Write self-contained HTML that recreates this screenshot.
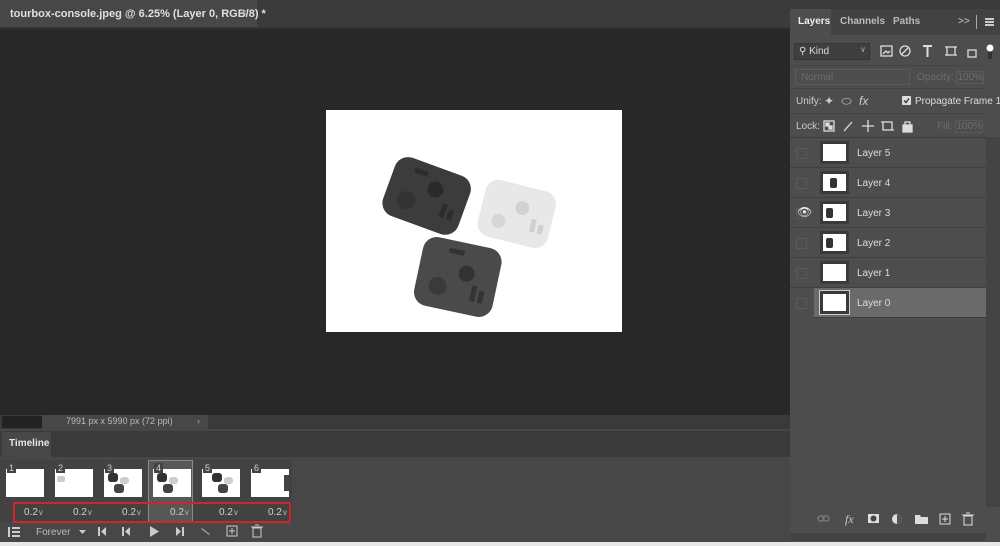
<!DOCTYPE html>
<html><head><meta charset="utf-8"><style>
*{margin:0;padding:0;box-sizing:border-box}
body{width:1000px;height:546px;background:#282828;font-family:"Liberation Sans",sans-serif;position:relative;overflow:hidden;color:#ddd}
.abs{position:absolute}
.t{font-size:10px;color:#d0d0d0;white-space:nowrap}
</style></head><body>
<div class="abs" style="left:0;top:0;width:790px;height:27px;background:#3b3b3b"></div>
<div class="abs" style="left:0;top:0;width:257px;height:27px;background:#474747"></div>
<div class="abs t" style="left:10px;top:8px;font-size:11px;font-weight:bold;color:#e0e0e0">tourbox-console.jpeg @ 6.25% (Layer 0, RGB/8) *</div>
<div class="abs t" style="left:241px;top:7px;font-size:11px;color:#999">×</div>
<div class="abs" style="left:0;top:27px;width:790px;height:2px;background:#323232"></div>
<div class="abs" style="left:326px;top:110px;width:296px;height:222px;background:#fff"></div>
<svg class="abs" style="left:326px;top:110px" width="296" height="222" viewBox="0 0 296 222">
 <g transform="translate(101,85) rotate(20)">
  <rect x="-40" y="-30" width="80" height="62" rx="14" fill="#3c3c3c"/>
  <circle cx="6" cy="-8" r="8" fill="#2a2a2a"/><circle cx="-18" cy="12" r="9" fill="#333"/>
  <rect x="18" y="2" width="5" height="14" fill="#2c2c2c"/><rect x="26" y="6" width="5" height="10" fill="#2c2c2c"/>
  <rect x="-20" y="-22" width="14" height="5" rx="2" fill="#2c2c2c"/>
 </g>
 <g transform="translate(191,103) rotate(14)">
  <rect x="-36" y="-28" width="72" height="58" rx="13" fill="#e8e8e8"/>
  <circle cx="4" cy="-6" r="7" fill="#d2d2d2"/><circle cx="-16" cy="12" r="7" fill="#d6d6d6"/>
  <rect x="16" y="2" width="5" height="13" fill="#d0d0d0"/><rect x="24" y="6" width="5" height="9" fill="#d0d0d0"/>
 </g>
 <g transform="translate(132,166) rotate(12)">
  <rect x="-40" y="-34" width="80" height="70" rx="14" fill="#4a4a4a"/>
  <circle cx="8" cy="-4" r="8" fill="#333"/><circle cx="-18" cy="14" r="9" fill="#3a3a3a"/>
  <rect x="16" y="6" width="5" height="16" fill="#333"/><rect x="24" y="10" width="5" height="12" fill="#333"/>
  <rect x="-14" y="-26" width="16" height="5" rx="2" fill="#333"/>
 </g>
</svg>
<div class="abs" style="left:0;top:415px;width:790px;height:14px;background:#3a3a3a"></div>
<div class="abs" style="left:42px;top:415px;width:166px;height:14px;background:#474747"></div>
<div class="abs" style="left:2px;top:416px;width:40px;height:12px;background:#222"></div>
<div class="abs t" style="left:66px;top:416px;font-size:9px;color:#bbb">7991 px x 5990 px (72 ppi)</div>
<div class="abs t" style="left:197px;top:416px;font-size:9px;color:#aaa">›</div>
<div class="abs" style="left:0;top:429px;width:790px;height:113px;background:#474747"></div>
<div class="abs" style="left:0;top:431px;width:790px;height:26px;background:#3a3a3a"></div>
<div class="abs" style="left:2px;top:432px;width:49px;height:25px;background:#474747"></div>
<div class="abs t" style="left:9px;top:438px;font-size:10px;font-weight:bold;color:#e6e6e6">Timeline</div>
<div class="abs" style="left:0;top:460px;width:292px;height:62px;background:#424242"></div>
<div class="abs" style="left:148px;top:460px;width:45px;height:62px;background:#575757;border:1px solid #8a8a8a"></div>
<div id="fr"></div>
<div class="abs" style="left:13px;top:502px;width:278px;height:21px;border:2px solid #d0252a;border-radius:2px"></div>
<div class="abs t" style="left:24px;top:507px">0.2<span style="color:#aaa;font-size:8px">∨</span></div>
<div class="abs t" style="left:73px;top:507px">0.2<span style="color:#aaa;font-size:8px">∨</span></div>
<div class="abs t" style="left:122px;top:507px">0.2<span style="color:#aaa;font-size:8px">∨</span></div>
<div class="abs t" style="left:170px;top:507px">0.2<span style="color:#aaa;font-size:8px">∨</span></div>
<div class="abs t" style="left:219px;top:507px">0.2<span style="color:#aaa;font-size:8px">∨</span></div>
<div class="abs t" style="left:268px;top:507px">0.2<span style="color:#aaa;font-size:8px">∨</span></div>
<svg class="abs" style="left:0;top:522px" width="300" height="20">
 <g fill="#ccc">
  <rect x="8" y="5" width="2" height="10"/><rect x="12" y="5" width="8" height="2"/><rect x="12" y="9" width="8" height="2"/><rect x="12" y="13" width="8" height="2"/>
  <path d="M79 8h7l-3.5 4z"/>
  <rect x="98" y="5" width="2" height="9"/><path d="M106 5v9l-5-4.5z"/>
  <rect x="122" y="5" width="2" height="9"/><path d="M130 5v9l-5-4.5z"/>
  <path d="M150 4v11l9-5.5z"/>
  <path d="M176 5v9l5-4.5z"/><rect x="182" y="5" width="2" height="9"/>
  <path d="M202 6l8 6-1 1-8-6z" fill="#999"/>
 </g>
 <rect x="227" y="4" width="10" height="10" fill="none" stroke="#ccc"/><path d="M232 6v6M229 9h6" stroke="#ccc"/>
 <rect x="253" y="6" width="8" height="9" fill="none" stroke="#ccc"/><path d="M251 5h12M255 3h4" stroke="#ccc"/>
</svg>
<div class="abs t" style="left:36px;top:527px;color:#bbb">Forever</div>
<div class="abs" style="left:0;top:542px;width:1000px;height:4px;background:#e8e8e8"></div>
<div class="abs" style="left:790px;top:0;width:210px;height:542px;background:#4d4d4d"></div>
<div class="abs" style="left:790px;top:0;width:210px;height:9px;background:#3a3a3a"></div>
<div class="abs" style="left:790px;top:9px;width:210px;height:26px;background:#424242"></div>
<div class="abs" style="left:790px;top:9px;width:41px;height:26px;background:#4d4d4d"></div>
<div class="abs t" style="left:798px;top:16px;font-weight:bold;color:#eee">Layers</div>
<div class="abs t" style="left:840px;top:16px;font-weight:bold;color:#bbb">Channels</div>
<div class="abs t" style="left:893px;top:16px;font-weight:bold;color:#bbb">Paths</div>
<div class="abs t" style="left:958px;top:16px;color:#ccc">&gt;&gt;</div>
<div class="abs" style="left:976px;top:15px;width:1px;height:14px;background:#aaa"></div>
<div class="abs" style="left:985px;top:18px;width:9px;height:2px;background:#ccc;box-shadow:0 3px #ccc,0 6px #ccc"></div>
<div class="abs" style="left:794px;top:43px;width:76px;height:17px;background:#3f3f3f;border:1px solid #363636"></div>
<div class="abs t" style="left:799px;top:46px;color:#ddd">⚲ Kind</div>
<div class="abs t" style="left:860px;top:45px;color:#aaa;font-size:8px">∨</div>
<svg class="abs" style="left:878px;top:42px" width="122" height="20" fill="none" stroke="#ddd" stroke-width="1.3">
 <rect x="3" y="4" width="11" height="10"/><path d="M5 12l3-3 2 2 2-2"/>
 <circle cx="27" cy="9" r="5"/><path d="M24 12l6-6"/>
 <path d="M45 4h9M49.5 4v11" stroke-width="2"/>
 <rect x="69" y="5" width="8" height="8"/><path d="M67 5h2M67 13h2M77 5h2M77 13h2"/>
 <rect x="90" y="8" width="8" height="7"/>
 <circle cx="112" cy="6" r="3.5" fill="#fff" stroke="none"/><rect x="110" y="10" width="4" height="7" fill="#333" stroke="none"/>
</svg>
<div class="abs" style="left:790px;top:65px;width:196px;height:1px;background:#444"></div>
<div class="abs t" style="left:801px;top:72px;color:#6c6c6c">Normal</div>
<div class="abs" style="left:795px;top:69px;width:115px;height:16px;border:1px solid #5a5a5a"></div>
<div class="abs t" style="left:917px;top:72px;color:#6c6c6c">Opacity: <span style="border:1px solid #5a5a5a">100%</span></div>
<div class="abs" style="left:790px;top:88px;width:196px;height:1px;background:#444"></div>
<div class="abs t" style="left:796px;top:96px;color:#ccc">Unify:</div>
<div class="abs t" style="left:824px;top:94px;color:#ccc;font-size:12px">✦ <span style="margin-left:4px">&#x2B2D;</span> <i style="margin-left:4px">fx</i></div>
<div class="abs" style="left:902px;top:96px;width:9px;height:9px;background:#ddd;border-radius:1px"></div>
<svg class="abs" style="left:902px;top:96px" width="9" height="9"><path d="M2 4.5l2 2 3-4" stroke="#333" stroke-width="1.4" fill="none"/></svg>
<div class="abs t" style="left:915px;top:96px;color:#ddd">Propagate Frame 1</div>
<div class="abs" style="left:790px;top:113px;width:196px;height:1px;background:#444"></div>
<div class="abs t" style="left:796px;top:121px;color:#ccc">Lock:</div>
<svg class="abs" style="left:822px;top:118px" width="95" height="16" fill="none" stroke="#ddd" stroke-width="1.3">
 <rect x="2" y="3" width="10" height="10"/><rect x="4" y="5" width="3" height="3" fill="#ddd"/><rect x="7" y="8" width="3" height="3" fill="#ddd"/>
 <path d="M22 13l8-9"/>
 <path d="M46 2v12M40 8h12"/>
 <rect x="61" y="4" width="9" height="8"/><path d="M59 4h2M70 12h2"/>
 <rect x="81" y="7" width="9" height="7" fill="#ddd"/><path d="M83 7v-3h5v3"/>
</svg>
<div class="abs t" style="left:937px;top:121px;color:#6c6c6c">Fill: <span style="border:1px solid #5a5a5a">100%</span></div>
<div class="abs" style="left:790px;top:137px;width:196px;height:1px;background:#3c3c3c"></div>
<div id="ly"></div>
<div class="abs" style="left:986px;top:137px;width:14px;height:370px;background:#444"></div>
<div class="abs" style="left:790px;top:533px;width:196px;height:8px;background:#444"></div>
<svg class="abs" style="left:815px;top:510px" width="170" height="18">
 <g fill="none" stroke="#777" stroke-width="1.5"><rect x="3" y="6" width="6" height="5" rx="2.5"/><rect x="8" y="6" width="6" height="5" rx="2.5"/></g>
 <text x="30" y="13" fill="#ccc" font-size="12" font-style="italic" font-family="Liberation Serif">fx</text>
 <rect x="53" y="4" width="11" height="9" fill="#ddd"/><circle cx="58.5" cy="8.5" r="3" fill="#444"/>
 <circle cx="82" cy="9" r="5" fill="#ddd"/><path d="M82 4a5 5 0 0 1 0 10z" fill="#555"/>
 <path d="M100 5h5l1 2h7v7h-13z" fill="#ddd"/>
 <rect x="125" y="4" width="10" height="10" fill="none" stroke="#ddd"/><path d="M130 6v6M127 9h6" stroke="#ddd"/>
 <rect x="149" y="6" width="8" height="9" fill="none" stroke="#ddd"/><path d="M147 5h12M151 3h4" stroke="#ddd"/>
</svg>
<script>
var fr='',thumbs=['','m','d','d','d','e'];
for(var i=0;i<6;i++){var x=6+i*49;
fr+='<div class="abs" style="left:'+x+'px;top:469px;width:38px;height:28px;background:#fff"></div>';
if(thumbs[i]=='m')fr+='<div class="abs" style="left:'+(x+2)+'px;top:476px;width:8px;height:6px;background:#ccc;border-radius:2px"></div>';
if(thumbs[i]=='d')fr+='<div class="abs" style="left:'+(x+(i==4?10:4))+'px;top:473px;width:10px;height:9px;background:#333;border-radius:3px"></div><div class="abs" style="left:'+(x+(i==4?22:16))+'px;top:477px;width:9px;height:7px;background:#ccc;border-radius:3px"></div><div class="abs" style="left:'+(x+(i==4?16:10))+'px;top:484px;width:10px;height:9px;background:#444;border-radius:3px"></div>';
if(thumbs[i]=='e')fr+='<div class="abs" style="left:'+(x+33)+'px;top:475px;width:5px;height:16px;background:#444"></div>';
fr+='<div class="abs t" style="left:'+(x+1)+'px;top:463px;background:#444;padding:0 2px;font-size:9px">'+(i+1)+'</div>';}
document.getElementById('fr').innerHTML=fr;
var ly='',nm=[5,4,3,2,1,0];
for(var j=0;j<6;j++){var y=138+j*30,sel=j==5;
ly+='<div class="abs" style="left:790px;top:'+y+'px;width:196px;height:30px;background:'+(sel?'#6a6a6a':'#4d4d4d')+';border-bottom:1px solid #3f3f3f"></div>';
if(sel)ly+='<div class="abs" style="left:790px;top:'+y+'px;width:24px;height:30px;background:#4d4d4d"></div>';
ly+='<div class="abs" style="left:796px;top:'+(y+10)+'px;width:11px;height:11px;border:1px solid #5a5a5a"></div>';
ly+='<div class="abs" style="left:820px;top:'+(y+3)+'px;width:29px;height:23px;background:#fff;border:3px solid #3a3a3a'+(sel?';outline:1px solid #ccc':'')+'"></div>';
if(nm[j]>=2&&nm[j]<=4)ly+='<div class="abs" style="left:'+(826+(nm[j]==4?4:0))+'px;top:'+(y+10)+'px;width:7px;height:10px;background:#333;border-radius:2px"></div>';
ly+='<div class="abs t" style="left:857px;top:'+(y+10)+'px;color:#ddd">Layer '+nm[j]+'</div>';}
ly+='<div class="abs t" style="left:797px;top:205px;font-size:12px;color:#eee">&#x1F441;&#xFE0E;</div>';
document.getElementById('ly').innerHTML=ly;
</script>
</body></html>
